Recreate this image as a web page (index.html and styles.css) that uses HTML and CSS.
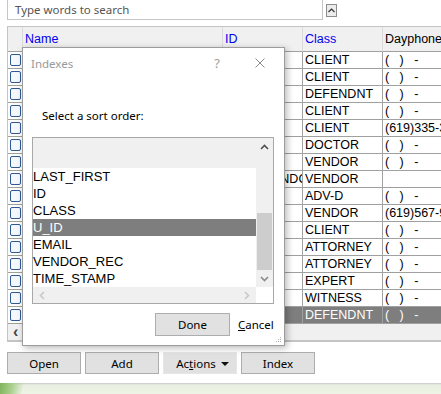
FILE: index.html
```html
<!DOCTYPE html>
<html lang="en">
  <head>
    <meta charset="utf-8" />
    <link rel="stylesheet" href="styles.css">
    <title>Contacts - Indexes</title>
  </head>
  <body>
    <div class="app">
      <!-- Barra de busca -->
      <div class="search-row">
        <div class="search">Type words to search</div>
        <button class="collapse" type="button" aria-label="Collapse">
          <svg viewBox="0 0 9 11" width="9" height="11"><path d="M1.5 7 L4.5 4 L7.5 7" fill="none" stroke="#333" stroke-width="1.2"/></svg>
        </button>
      </div>

      <!-- Grade de contatos -->
      <div class="grid">
        <div class="grid-row grid-head">
          <div class="cell sel"></div>
          <div class="cell link">Name</div>
          <div class="cell link">ID</div>
          <div class="cell link">Class</div>
          <div class="cell">Dayphone</div>
        </div>
        <div class="grid-row"><div class="cell sel"><i class="box"></i></div><div class="cell"></div><div class="cell"></div><div class="cell">CLIENT</div><div class="cell">(&nbsp;&nbsp;&nbsp;)&nbsp;&nbsp;&nbsp;-</div></div>
        <div class="grid-row"><div class="cell sel"><i class="box"></i></div><div class="cell"></div><div class="cell"></div><div class="cell">CLIENT</div><div class="cell">(&nbsp;&nbsp;&nbsp;)&nbsp;&nbsp;&nbsp;-</div></div>
        <div class="grid-row"><div class="cell sel"><i class="box"></i></div><div class="cell"></div><div class="cell"></div><div class="cell">DEFENDNT</div><div class="cell">(&nbsp;&nbsp;&nbsp;)&nbsp;&nbsp;&nbsp;-</div></div>
        <div class="grid-row"><div class="cell sel"><i class="box"></i></div><div class="cell"></div><div class="cell"></div><div class="cell">CLIENT</div><div class="cell">(&nbsp;&nbsp;&nbsp;)&nbsp;&nbsp;&nbsp;-</div></div>
        <div class="grid-row"><div class="cell sel"><i class="box"></i></div><div class="cell"></div><div class="cell"></div><div class="cell">CLIENT</div><div class="cell">(619)335-3412</div></div>
        <div class="grid-row"><div class="cell sel"><i class="box"></i></div><div class="cell"></div><div class="cell"></div><div class="cell">DOCTOR</div><div class="cell">(&nbsp;&nbsp;&nbsp;)&nbsp;&nbsp;&nbsp;-</div></div>
        <div class="grid-row"><div class="cell sel"><i class="box"></i></div><div class="cell"></div><div class="cell"></div><div class="cell">VENDOR</div><div class="cell">(&nbsp;&nbsp;&nbsp;)&nbsp;&nbsp;&nbsp;-</div></div>
        <div class="grid-row"><div class="cell sel"><i class="box"></i></div><div class="cell"></div><div class="cell">STAFFVENDOR</div><div class="cell">VENDOR</div><div class="cell"></div></div>
        <div class="grid-row"><div class="cell sel"><i class="box"></i></div><div class="cell"></div><div class="cell"></div><div class="cell">ADV-D</div><div class="cell">(&nbsp;&nbsp;&nbsp;)&nbsp;&nbsp;&nbsp;-</div></div>
        <div class="grid-row"><div class="cell sel"><i class="box"></i></div><div class="cell"></div><div class="cell"></div><div class="cell">VENDOR</div><div class="cell">(619)567-9021</div></div>
        <div class="grid-row"><div class="cell sel"><i class="box"></i></div><div class="cell"></div><div class="cell"></div><div class="cell">CLIENT</div><div class="cell">(&nbsp;&nbsp;&nbsp;)&nbsp;&nbsp;&nbsp;-</div></div>
        <div class="grid-row"><div class="cell sel"><i class="box"></i></div><div class="cell"></div><div class="cell"></div><div class="cell">ATTORNEY</div><div class="cell">(&nbsp;&nbsp;&nbsp;)&nbsp;&nbsp;&nbsp;-</div></div>
        <div class="grid-row"><div class="cell sel"><i class="box"></i></div><div class="cell"></div><div class="cell"></div><div class="cell">ATTORNEY</div><div class="cell">(&nbsp;&nbsp;&nbsp;)&nbsp;&nbsp;&nbsp;-</div></div>
        <div class="grid-row"><div class="cell sel"><i class="box"></i></div><div class="cell"></div><div class="cell"></div><div class="cell">EXPERT</div><div class="cell">(&nbsp;&nbsp;&nbsp;)&nbsp;&nbsp;&nbsp;-</div></div>
        <div class="grid-row"><div class="cell sel"><i class="box"></i></div><div class="cell"></div><div class="cell"></div><div class="cell">WITNESS</div><div class="cell">(&nbsp;&nbsp;&nbsp;)&nbsp;&nbsp;&nbsp;-</div></div>
        <div class="grid-row is-current"><div class="cell sel"><i class="box"></i></div><div class="cell"></div><div class="cell"></div><div class="cell">DEFENDNT</div><div class="cell">(&nbsp;&nbsp;&nbsp;)&nbsp;&nbsp;&nbsp;-</div></div>
        <div class="grid-hscroll"><span class="arrow-left">&lsaquo;</span></div>
      </div>

      <!-- Botões de ação -->
      <div class="actions">
        <button class="btn" type="button">Open</button>
        <button class="btn" type="button">Add</button>
        <button class="btn btn--menu" type="button">Ac<u>t</u>ions <span class="caret"></span></button>
        <button class="btn" type="button">Index</button>
      </div>

      <div class="footer-strip"></div>

      <!-- Diálogo de índices -->
      <div class="dialog">
        <div class="dialog__title">
          <span class="dialog__caption">Indexes</span>
          <span class="dialog__help">?</span>
          <svg class="dialog__close" viewBox="0 0 10 10" width="10" height="10"><path d="M0.5 0.5 L9.5 9.5 M9.5 0.5 L0.5 9.5" stroke="#8a8a8a" stroke-width="1"/></svg>
        </div>
        <div class="dialog__label">Select a sort order:</div>
        <div class="listbox">
          <div class="listbox__main">
            <div class="listbox__items">
              <div class="listbox__blank"></div>
              <div class="listbox__item">LAST_FIRST</div>
              <div class="listbox__item">ID</div>
              <div class="listbox__item">CLASS</div>
              <div class="listbox__item is-selected">U_ID</div>
              <div class="listbox__item">EMAIL</div>
              <div class="listbox__item">VENDOR_REC</div>
              <div class="listbox__item">TIME_STAMP</div>
            </div>
            <div class="vscroll">
              <div class="vscroll__btn">
                <svg viewBox="0 0 9 6" width="9" height="6"><path d="M1 5 L4.5 1.5 L8 5" fill="none" stroke="#505050" stroke-width="1.6"/></svg>
              </div>
              <div class="vscroll__track">
                <div class="vscroll__thumb"></div>
              </div>
              <div class="vscroll__btn">
                <svg viewBox="0 0 9 6" width="9" height="6"><path d="M1 1 L4.5 4.5 L8 1" fill="none" stroke="#8a8a8a" stroke-width="1.6"/></svg>
              </div>
            </div>
          </div>
          <div class="listbox__foot">
            <div class="hscroll">
              <svg viewBox="0 0 6 9" width="6" height="9"><path d="M5 1 L1.5 4.5 L5 8" fill="none" stroke="#c8c8c8" stroke-width="1.6"/></svg>
              <svg viewBox="0 0 6 9" width="6" height="9"><path d="M1 1 L4.5 4.5 L1 8" fill="none" stroke="#c8c8c8" stroke-width="1.6"/></svg>
            </div>
            <div class="corner"></div>
          </div>
        </div>
        <div class="dialog__buttons">
          <button class="btn btn--done" type="button">Done</button>
          <span class="link-btn"><u>C</u>ancel</span>
        </div>
        <svg class="grip" viewBox="0 0 7 7" width="7" height="7">
          <rect x="5" y="1" width="1" height="1" fill="#b0b0b0"/>
          <rect x="3" y="3" width="1" height="1" fill="#b0b0b0"/>
          <rect x="5" y="3" width="1" height="1" fill="#b0b0b0"/>
          <rect x="1" y="5" width="1" height="1" fill="#b0b0b0"/>
          <rect x="3" y="5" width="1" height="1" fill="#b0b0b0"/>
          <rect x="5" y="5" width="1" height="1" fill="#b0b0b0"/>
        </svg>
      </div>
    </div>
  </body>
</html>
```

FILE: styles.css
```css
/* Base */
*, *::before, *::after {
  box-sizing: border-box;
}

html, body {
  margin: 0;
  padding: 0;
  background: #fff;
}

.app {
  position: relative;
  width: 441px;
  height: 394px;
  overflow: hidden;
  font-family: 'Liberation Sans', Arial, sans-serif;
}

button {
  font: inherit;
  margin: 0;
}

/* Busca */
.search-row {
  display: flex;
  align-items: flex-start;
  gap: 3px;
  height: 20px;
  padding-left: 7px;
}

.search {
  width: 316px;
  height: 20px;
  border: 1px solid #c6c6c6;
  border-top: none;
  padding: 2px 0 0 7px;
  font-family: 'Noto Sans', sans-serif;
  font-size: 11.5px;
  line-height: 15px;
  color: #555;
}

.collapse {
  display: flex;
  align-items: center;
  justify-content: center;
  width: 11px;
  height: 13px;
  margin-top: 4px;
  padding: 0;
  border: 1px solid #8d8d8d;
  background: #ececec;
}

/* Grade */
.grid {
  margin: 6px 0 0 7px;
  width: 470px;
  border: 1px solid #c4c4c4;
  border-right: none;
  font-size: 12.5px;
}

.grid-row {
  display: grid;
  grid-template-columns: 15px 200px 80px 80px 94px;
  height: 17px;
}

.cell {
  border-right: 1px solid #a0a0a0;
  border-bottom: 1px solid #a0a0a0;
  padding-left: 2px;
  line-height: 16px;
  white-space: nowrap;
  overflow: hidden;
  color: #000;
}

.cell.sel {
  padding: 2px 0 0 2px;
  background: #fff;
}

.box {
  display: block;
  width: 11px;
  height: 12px;
  border: 1px solid #2d5a96;
  border-radius: 2px;
  background: #f4f7fb;
}

.grid-head {
  height: 25px;
  background: #f0f0f0;
}

.grid-head .cell {
  border-right-color: #dadada;
  border-bottom-color: #a0a0a0;
  display: flex;
  align-items: flex-end;
  padding-bottom: 4px;
  background: #f0f0f0;
}

.grid-head .cell.link {
  color: #0000f0;
}

.grid-row.is-current .cell:not(.sel) {
  background: #7e7e7e;
  color: #fff;
}

.grid-hscroll {
  height: 17px;
  background: #f0f0f0;
  border-bottom: 1px solid #c4c4c4;
  padding-left: 5px;
  overflow: hidden;
}

.arrow-left {
  font-size: 16px;
  line-height: 15px;
  font-weight: bold;
  color: #444;
}

/* Ações */
.actions {
  display: flex;
  gap: 4px;
  padding: 10px 0 0 7px;
}

.btn {
  width: 74px;
  height: 22px;
  border: 1px solid #adadad;
  background: #e1e1e1;
  font-family: 'Noto Sans', sans-serif;
  font-size: 11.5px;
  line-height: 15px;
  color: #000;
  padding: 0;
}

.btn--menu {
  border-color: #e6e6e6;
  position: relative;
  padding-right: 8px;
}

.caret {
  position: absolute;
  right: 7px;
  top: 9px;
  border-left: 4px solid transparent;
  border-right: 4px solid transparent;
  border-top: 4px solid #111;
}

.footer-strip {
  margin-top: 9px;
  height: 12px;
  background:
    linear-gradient(100deg, #7fb35a 0, #a9cf8c 12px, rgba(255,255,255,0) 24px),
    linear-gradient(180deg, #c9c9c9 0, #e9efe2 2px, #eef5e7 100%);
}

/* Diálogo */
.dialog {
  position: absolute;
  left: 22px;
  top: 47px;
  width: 263px;
  height: 299px;
  background: #fff;
  border: 1px solid #9c9c9c;
  box-shadow: 2px 2px 7px rgba(0, 0, 0, 0.28);
  font-family: 'Noto Sans', sans-serif;
  font-size: 11.5px;
}

.dialog__title {
  display: flex;
  align-items: center;
  height: 30px;
  padding: 0 19px 0 8px;
  color: #999;
}

.dialog__caption {
  flex: 1;
}

.dialog__help {
  margin-right: 35px;
  font-size: 13px;
  color: #a0a0a0;
}

.dialog__label {
  padding: 29px 0 0 19px;
  line-height: 17px;
  color: #000;
}

.listbox {
  margin: 13px 0 0 9px;
  width: 242px;
  height: 167px;
  border: 1px solid #a8a8a8;
  display: flex;
  flex-direction: column;
}

.listbox__main {
  display: flex;
  height: 149px;
}

.listbox__items {
  flex: 1;
  font-family: 'Liberation Sans', Arial, sans-serif;
  font-size: 13px;
}

.listbox__blank {
  height: 30px;
  background: #f0f0f0;
}

.listbox__item {
  height: 17px;
  line-height: 17px;
  color: #000;
}

.listbox__item.is-selected {
  background: #7e7e7e;
  color: #fff;
}

.vscroll {
  width: 17px;
  display: flex;
  flex-direction: column;
  background: #f0f0f0;
}

.vscroll__btn {
  height: 17px;
  display: flex;
  align-items: center;
  justify-content: center;
}

.vscroll__track {
  flex: 1;
  display: flex;
  flex-direction: column;
  justify-content: flex-end;
}

.vscroll__thumb {
  height: 57px;
  margin: 0 1px;
  background: #cdcdcd;
}

.listbox__foot {
  display: flex;
  flex: 1;
}

.hscroll {
  flex: 1;
  display: flex;
  align-items: center;
  justify-content: space-between;
  padding: 0 6px;
  background: #f0f0f0;
}

.corner {
  width: 17px;
  background: #fff;
}

.dialog__buttons {
  display: flex;
  align-items: center;
  gap: 8px;
  padding: 9px 0 0 132px;
}

.btn--done {
  width: 75px;
  height: 23px;
}

.link-btn {
  color: #000;
}

.grip {
  position: absolute;
  right: 2px;
  bottom: 2px;
}
```
